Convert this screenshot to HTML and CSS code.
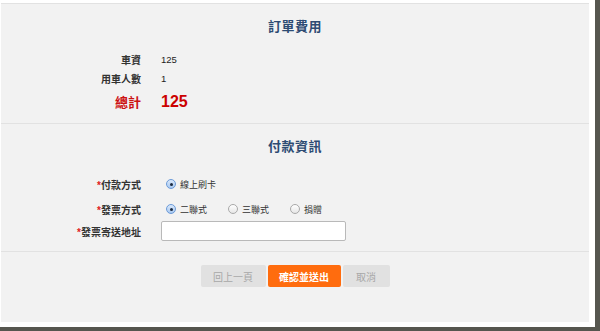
FILE: index.html
```html
<!DOCTYPE html>
<html lang="zh-Hant">
<head>
  <meta charset="UTF-8">
  <title>訂單確認</title>
  <link rel="stylesheet" href="styles.css">
</head>
<body>
  <div class="window">
    <div class="panel">
      <div class="section fee">
        <h2>訂單費用</h2>
        <div class="row">
          <label>車資</label>
          <span class="value">125</span>
        </div>
        <div class="row">
          <label>用車人數</label>
          <span class="value">1</span>
        </div>
        <div class="row total">
          <label>總計</label>
          <span class="value">125</span>
        </div>
      </div>

      <div class="section pay">
        <h2>付款資訊</h2>
        <div class="row field">
          <label><span class="req">*</span>付款方式</label>
          <div class="options">
            <span class="option"><span class="radio checked"></span>線上刷卡</span>
          </div>
        </div>
        <div class="row field">
          <label><span class="req">*</span>發票方式</label>
          <div class="options">
            <span class="option"><span class="radio checked"></span>二聯式</span>
            <span class="option"><span class="radio"></span>三聯式</span>
            <span class="option"><span class="radio"></span>捐贈</span>
          </div>
        </div>
        <div class="row address">
          <label><span class="req">*</span>發票寄送地址</label>
          <input type="text" class="text-input">
        </div>
      </div>

      <div class="section actions">
        <button class="btn btn-grey back">回上一頁</button>
        <button class="btn btn-orange">確認並送出</button>
        <button class="btn btn-grey cancel">取消</button>
      </div>
    </div>
  </div>
</body>
</html>
```

FILE: styles.css
```css
body {
  margin: 0;
  background: #ffffff;
  font-family: "Liberation Sans", "Noto Sans CJK TC", sans-serif;
}

.window {
  width: 600px;
  height: 331px;
  box-sizing: border-box;
  padding: 3px 6px 5px 1px;
  border-right: 5px solid #56564f;
  border-bottom: 4px solid #56564f;
  display: flex;
}

.panel {
  flex: 1;
  background: #f2f2f2;
  border-top: 1px solid #e2e2e2;
  display: flex;
  flex-direction: column;
}

.section {
  border-bottom: 1px solid #e2e2e2;
}

h2 {
  margin: 0;
  text-align: center;
  font-size: 13px;
  line-height: 16px;
  font-weight: bold;
  color: #2d4b73;
  letter-spacing: 0.5px;
}

.fee {
  padding: 15px 0 10px;
}

.fee h2 {
  margin-bottom: 15px;
}

.row {
  display: flex;
  align-items: center;
  height: 19px;
}

.row label {
  width: 140px;
  text-align: right;
  font-size: 10px;
  font-weight: bold;
  color: #333;
  margin-right: 20px;
}

.value {
  font-size: 9.5px;
  color: #222;
}

.total {
  height: 23px;
  margin-top: 2px;
}

.total label {
  font-size: 13px;
  color: #cc1111;
}

.total .value {
  font-size: 16px;
  font-weight: bold;
  color: #cc0000;
}

.pay {
  padding: 15px 0 10px;
}

.pay h2 {
  margin-bottom: 19px;
}

.field {
  height: 20px;
  margin-bottom: 5px;
}

.req {
  color: #e02020;
}

.options {
  display: flex;
  padding-left: 5px;
}

.option {
  display: flex;
  align-items: center;
  font-size: 9px;
  color: #333;
  margin-right: 21px;
}

.radio {
  width: 8px;
  height: 8px;
  border: 1px solid #a9a9a9;
  border-radius: 50%;
  background: linear-gradient(#ffffff, #e6e6e6);
  margin-right: 4px;
  position: relative;
}

.radio.checked {
  border-color: #6b9ad8;
  background: linear-gradient(#d9e8fb, #a8c8f0);
}

.radio.checked::after {
  content: "";
  position: absolute;
  left: 2.5px;
  top: 2.5px;
  width: 3px;
  height: 3px;
  border-radius: 50%;
  background: #1b2a40;
}

.address {
  height: 20px;
  margin-top: -3px;
}

.text-input {
  width: 185px;
  height: 20px;
  box-sizing: border-box;
  border: 1px solid #b9b9b9;
  border-radius: 2px;
  background: #fff;
  margin: 0;
}

.actions {
  border-bottom: none;
  padding-top: 13px;
  display: flex;
  justify-content: center;
  gap: 2px;
}

.btn {
  height: 22px;
  border: none;
  border-radius: 2px;
  font-family: "Liberation Sans", "Noto Sans CJK TC", sans-serif;
  font-size: 10px;
  padding: 0;
}

.btn-grey {
  background: #e1e1e1;
  color: #a8a8a8;
}

.back {
  width: 65px;
}

.cancel {
  width: 47px;
}

.btn-orange {
  width: 73px;
  background: #ff6c0e;
  color: #ffffff;
  font-weight: bold;
}
```
